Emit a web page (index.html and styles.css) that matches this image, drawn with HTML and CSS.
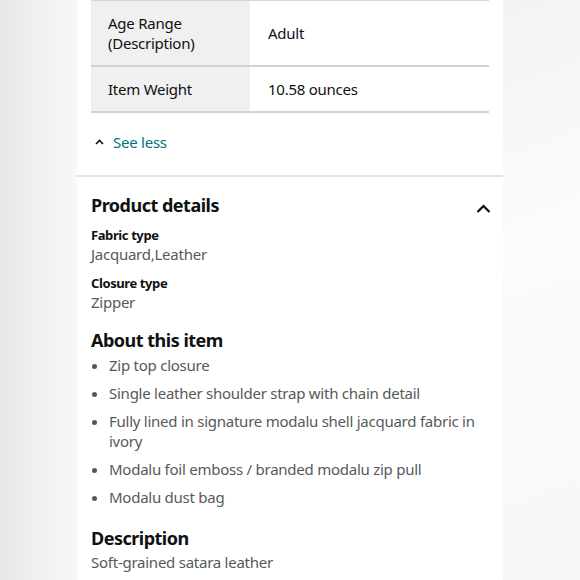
FILE: index.html
```html
<!DOCTYPE html>
<html>
<head>
<meta charset="utf-8">
<link rel="stylesheet" href="styles.css">
</head>
<body>
<div class="stage">
  <div class="side side-left"></div>
  <main class="panel">
    <div class="inner">
      <table class="specs">
        <tr>
          <th>Age Range<br>(Description)</th>
          <td>Adult</td>
        </tr>
        <tr>
          <th>Item Weight</th>
          <td>10.58 ounces</td>
        </tr>
      </table>
      <div class="see-less">
        <svg class="chev-small" width="9" height="6" viewBox="0 0 9 6"><path d="M1 5 L4.5 1.5 L8 5" fill="none" stroke="#0f1111" stroke-width="1.6"/></svg>
        <span>See less</span>
      </div>
    </div>
    <div class="divider"></div>
    <div class="inner details">
      <div class="head-row">
        <h2>Product details</h2>
        <svg class="chev-big" width="15" height="10" viewBox="0 0 15 10"><path d="M1.5 8 L7.5 2 L13.5 8" fill="none" stroke="#0f1111" stroke-width="2.2"/></svg>
      </div>
      <dl class="attrs">
        <dt>Fabric type</dt>
        <dd>Jacquard,Leather</dd>
        <dt>Closure type</dt>
        <dd>Zipper</dd>
      </dl>
      <h2 class="about">About this item</h2>
      <ul class="bullets">
        <li>Zip top closure</li>
        <li>Single leather shoulder strap with chain detail</li>
        <li>Fully lined in signature modalu shell jacquard fabric in ivory</li>
        <li>Modalu foil emboss / branded modalu zip pull</li>
        <li>Modalu dust bag</li>
      </ul>
      <h2 class="desc">Description</h2>
      <p class="desc-text">Soft-grained satara leather</p>
    </div>
  </main>
  <div class="side side-right"></div>
</div>
</body>
</html>
```
FILE: styles.css
```css
html, body {
  margin: 0;
  padding: 0;
}
body {
  font-family: "Noto Sans", "Liberation Sans", sans-serif;
  color: #0f1111;
  background: #f6f6f6;
  letter-spacing: -0.25px;
}
.stage {
  display: flex;
  width: 580px;
  height: 580px;
  overflow: hidden;
}
.side {
  width: 77px;
  flex: none;
}
.side-left {
  background: linear-gradient(90deg, #e7e7e7 0%, #f1f1f1 55%, #f7f7f7 100%);
}
.side-right {
  background: linear-gradient(160deg, #f3f3f3 0%, #fbfbfb 40%, #f7f7f7 100%);
}
.panel {
  width: 426px;
  flex: none;
  background: #fff;
}
.inner {
  padding: 0 14px;
}
.specs {
  width: 398px;
  border-collapse: collapse;
  font-size: 15px;
  line-height: 20px;
  border-top: 1px solid #d5d5d5;
}
.specs tr {
  border-bottom: 2px solid #d2d2d2;
}
.specs th {
  width: 159px;
  box-sizing: border-box;
  background: #f0f0f0;
  text-align: left;
  font-weight: normal;
  padding: 12px 10px 12px 17px;
}
.specs td {
  padding: 12px 18px;
}
.see-less {
  display: flex;
  align-items: center;
  height: 58px;
  padding-bottom: 4px;
  color: #007185;
  font-size: 15px;
}
.chev-small {
  margin: 0 9px 0 4px;
}
.divider {
  height: 2px;
  background: #e4e4e4;
}
.details {
  padding-top: 16px;
}
.head-row {
  display: flex;
  justify-content: space-between;
  align-items: center;
}
h2 {
  margin: 0;
  font-size: 18px;
  line-height: 24px;
  font-weight: bold;
  letter-spacing: -0.5px;
}
.chev-big {
  margin-right: -2px;
  margin-top: 8px;
}
.attrs {
  margin: 9px 0 0;
}
.attrs dt {
  font-size: 13px;
  line-height: 18px;
  font-weight: bold;
  letter-spacing: -0.4px;
}
.attrs dd {
  margin: 0 0 10px;
  font-size: 15px;
  line-height: 20px;
  color: #565959;
}
.about {
  margin-top: 16px;
}
.bullets {
  margin: 3px 0 0;
  padding: 0 0 0 18px;
  font-size: 15px;
  line-height: 20px;
  color: #565959;
}
.bullets li {
  margin-bottom: 8px;
}
.bullets li:last-child {
  margin-bottom: 0;
}
.desc {
  margin-top: 19px;
}
.desc-text {
  margin: 2px 0 0;
  font-size: 15px;
  line-height: 20px;
  color: #565959;
}
```
